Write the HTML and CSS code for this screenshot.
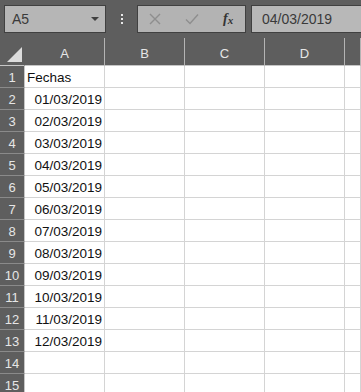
FILE: index.html
```html
<!DOCTYPE html>
<html lang="es">
<head>
  <meta charset="UTF-8">
  <title>Fechas</title>
  <link rel="stylesheet" href="styles.css">
</head>
<body>
  <div class="toolbar">
    <div class="namebox">
      <span>A5</span>
      <span class="caret"></span>
    </div>
    <div class="grip"><i></i><i></i><i></i></div>
    <div class="buttons">
      <svg class="btn" width="12" height="12" viewBox="0 0 12 12"><path d="M1 1L11 11M11 1L1 11" stroke="#8e8e8e" stroke-width="1.4" fill="none"/></svg>
      <svg class="btn" width="14" height="12" viewBox="0 0 14 12"><path d="M1 6.5L5 10.5L13 1.5" stroke="#8e8e8e" stroke-width="1.4" fill="none"/></svg>
      <span class="fx">f<sub>x</sub></span>
    </div>
    <div class="formula">04/03/2019</div>
  </div>

  <div class="sheet">
    <div class="corner"><span class="tri"></span></div>
    <div class="colhead">A</div>
    <div class="colhead">B</div>
    <div class="colhead">C</div>
    <div class="colhead">D</div>
    <div class="colhead"></div>
  </div>

  <div class="sheet" id="rows"></div>

  <script>
    var data = ['Fechas', '01/03/2019', '02/03/2019', '03/03/2019', '04/03/2019', '05/03/2019',
      '06/03/2019', '07/03/2019', '08/03/2019', '09/03/2019', '10/03/2019', '11/03/2019', '12/03/2019', '', ''];
    var rows = document.getElementById('rows');
    var html = '';
    data.forEach(function(value, i) {
      html += '<div class="rowhead">' + (i + 1) + '</div>';
      html += '<div class="cell' + (i > 0 ? ' num' : '') + '">' + value + '</div>';
      html += '<div class="cell"></div><div class="cell"></div><div class="cell"></div><div class="cell"></div>';
    });
    rows.innerHTML = html;
  </script>
</body>
</html>
```

FILE: styles.css
```css
body {
  margin: 0;
  width: 361px;
  height: 392px;
  overflow: hidden;
  background-color: #ffffff;
  font-family: "Liberation Sans", Arial, sans-serif;
}
.toolbar {
  height: 38px;
  background-color: #5e5e5e;
  display: flex;
  align-items: flex-start;
  padding-top: 5px;
  box-sizing: border-box;
}
.namebox {
  margin-left: 4px;
  width: 102px;
  height: 28px;
  box-sizing: border-box;
  border: 1px solid #404040;
  background-color: #b6b6b6;
  display: flex;
  align-items: center;
  justify-content: space-between;
  padding: 0 6px 0 7px;
  font-size: 14px;
  color: #3a3a3a;
}
.caret {
  width: 0;
  height: 0;
  border-left: 4px solid transparent;
  border-right: 4px solid transparent;
  border-top: 4px solid #404040;
}
.grip {
  width: 31px;
  height: 28px;
  display: flex;
  flex-direction: column;
  align-items: center;
  justify-content: center;
  gap: 2px;
}
.grip i {
  display: block;
  width: 2px;
  height: 2px;
  background-color: #e8e8e8;
}
.buttons {
  width: 109px;
  height: 28px;
  box-sizing: border-box;
  border: 1px solid #404040;
  background-color: #b3b3b3;
  display: flex;
  align-items: center;
  padding-left: 11px;
}
.btn {
  margin-right: 24px;
}
.fx {
  font-family: "Liberation Serif", "Times New Roman", serif;
  font-style: italic;
  font-weight: bold;
  font-size: 14px;
  color: #333;
}
.fx sub {
  font-size: 11px;
  vertical-align: -1px;
}
.formula {
  margin-left: 5px;
  flex: 1;
  height: 28px;
  box-sizing: border-box;
  border: 1px solid #404040;
  border-right: none;
  background-color: #b8b8b8;
  padding-left: 10px;
  line-height: 26px;
  font-size: 14px;
  color: #3a3a3a;
}
.sheet {
  display: grid;
  grid-template-columns: 25px repeat(4, 80px) 16px;
  overflow: hidden;
}
.corner,
.colhead {
  height: 28px;
  box-sizing: border-box;
  background-color: #5e5e5e;
  border-bottom: 1px solid #c6c6c6;
}
.corner {
  border-right: 1px solid #5e5e5e;
  position: relative;
}
.tri {
  position: absolute;
  right: 2px;
  bottom: 3px;
  width: 0;
  height: 0;
  border-left: 15px solid transparent;
  border-bottom: 15px solid #dcdcdc;
}
.colhead {
  border-right: 1px solid #b4b4b4;
  color: #e6e6e6;
  font-size: 13px;
  text-align: center;
  line-height: 31px;
}
.rowhead {
  height: 22px;
  box-sizing: border-box;
  background-color: #5e5e5e;
  border-right: 1px solid #c6c6c6;
  border-bottom: 1px solid #8a8a8a;
  color: #e6e6e6;
  font-size: 13px;
  text-align: center;
  padding-top: 2px;
  line-height: 20px;
}
.cell {
  height: 22px;
  box-sizing: border-box;
  border-right: 1px solid #d4d4d4;
  border-bottom: 1px solid #d4d4d4;
  font-size: 13.5px;
  color: #111;
  padding: 2px 2px 0;
  line-height: 20px;
  white-space: nowrap;
}
.cell.num {
  text-align: right;
}
```
